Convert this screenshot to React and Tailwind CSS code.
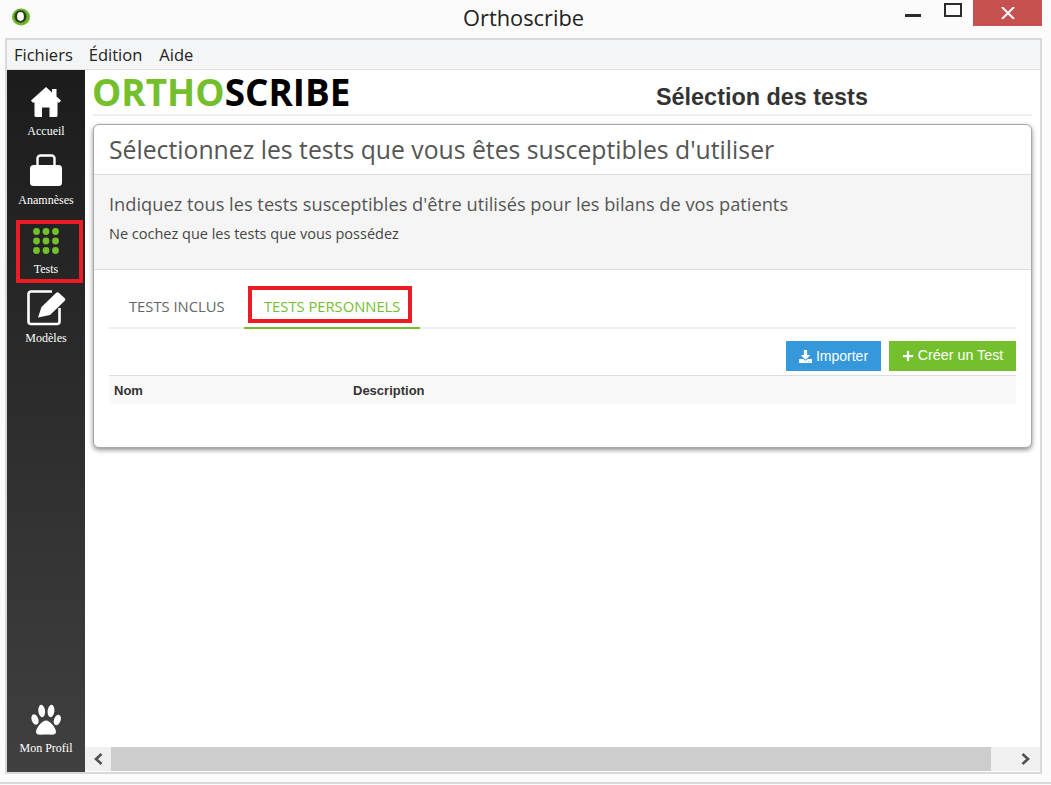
import React from 'react';
import { FaDownload, FaPlus } from 'react-icons/fa';

const serif = "font-['Liberation_Serif',serif]";

const HomeIcon = () => (
    <svg width="30" height="30" viewBox="0 0 30 30" fill="white">
        <path d="M15 0 L21 5.5 V2 H25.5 V9.5 L30 13.5 L28.5 15.5 H26.5 V28.5 a1.5 1.5 0 0 1 -1.5 1.5 H18.5 V20.5 H11 V30 H5 A1.5 1.5 0 0 1 3.5 28.5 V15.5 H1.5 L0 13.5 Z" />
    </svg>
);

const CaseIcon = () => (
    <svg width="32" height="32" viewBox="0 0 32 32">
        <path d="M7.5 12 V4.5 a3 3 0 0 1 3 -3 h11 a3 3 0 0 1 3 3 V12" fill="none" stroke="white" strokeWidth="2.4" />
        <rect x="0" y="11" width="32" height="21" rx="3.5" fill="white" />
    </svg>
);

const DotsIcon = () => (
    <svg width="27" height="26" viewBox="0 0 27 26" fill="#74c02c">
        {[3.5, 13, 22.5].map(y => [3.5, 13, 22.5].map(x => (
            <circle key={`${x}-${y}`} cx={x} cy={y} r="3.4" />
        )))}
    </svg>
);

const EditIcon = () => (
    <svg width="39" height="36" viewBox="0 0 39 36">
        <path d="M25 1.5 H4 a2.5 2.5 0 0 0 -2.5 2.5 V31.5 a2.5 2.5 0 0 0 2.5 2.5 H30 a2.5 2.5 0 0 0 2.5 -2.5 V18" fill="none" stroke="white" strokeWidth="2.6" />
        <path d="M11 27.5 L14.5 17 L29 3 a2 2 0 0 1 3 0 L37.5 8 a2 2 0 0 1 0 3 L23 25 Z" fill="white" />
    </svg>
);

const PawIcon = () => (
    <svg width="30" height="31" viewBox="0 0 30 31" fill="white">
        <ellipse cx="10.7" cy="7" rx="3.4" ry="6.2" transform="rotate(-6 10.7 7)" />
        <ellipse cx="20" cy="7" rx="3.4" ry="6.2" transform="rotate(6 20 7)" />
        <ellipse cx="4" cy="15.5" rx="3.3" ry="5.4" transform="rotate(-20 4 15.5)" />
        <ellipse cx="26.3" cy="16" rx="3.3" ry="5.4" transform="rotate(20 26.3 16)" />
        <path d="M15 16.5 C19 16.5 25 24 25 28 C25 31.5 20 30.5 15 30.5 C10 30.5 5 31.5 5 28 C5 24 11 16.5 15 16.5 Z" />
    </svg>
);

const NavItem = ({ icon, label, height, gap = 'mt-[7px]' }) => (
    <div className={`flex flex-col items-center justify-end ${height}`}>
        {icon}
        <span className={`${serif} text-[12px] leading-[14px] text-white ${gap}`}>{label}</span>
    </div>
);

const App = () => {
    return (
        <div className="relative w-[1051px] h-[785px] overflow-hidden bg-[#fbfbfb] font-['Noto_Sans',sans-serif]">
            {/* Title bar */}
            <div className="relative h-[38px] flex items-center justify-center">
                <svg className="absolute left-[11px] top-[7px]" width="20" height="20" viewBox="0 0 20 20">
                    <ellipse cx="10" cy="10" rx="9" ry="8.5" fill="#6ab42c" />
                    <ellipse cx="9.5" cy="9.5" rx="6" ry="6.2" fill="#2c3a1c" />
                    <ellipse cx="9.5" cy="9.5" rx="3.4" ry="4.4" fill="#fbfbfb" />
                </svg>
                <span className="text-[21.8px] leading-[36px] pb-[3px] text-[#222] font-['Open_Sans',sans-serif] mr-[4px]">Orthoscribe</span>
                <div className="absolute left-[905px] top-[14px] w-[16px] h-[3px] bg-[#2b2b2b]" />
                <div className="absolute left-[944px] top-[3px] w-[18px] h-[14px] border-2 border-[#2b2b2b]" />
                <div className="absolute left-[973px] top-0 w-[69px] h-[26px] bg-[#c75050] flex items-center justify-center">
                    <svg width="14" height="12" viewBox="0 0 14 12" stroke="white" strokeWidth="2"><path d="M1 0 L13 12 M13 0 L1 12" /></svg>
                </div>
            </div>

            {/* Window frame */}
            <div className="ml-[5px] w-[1037px] h-[736px] border-2 border-[#d9d9d9] flex flex-col bg-white">
                <div className="h-[30px] shrink-0 bg-[#f4f5f7] border-b border-[#e3e3e3] flex items-center gap-[16px] pl-[7px] pt-[2px] text-[16.5px] text-[#222] font-['Open_Sans',sans-serif]">
                    <span>Fichiers</span>
                    <span>Édition</span>
                    <span className="ml-[1px]">Aide</span>
                </div>

                <div className="flex flex-1 min-h-0">
                    {/* Sidebar */}
                    <div className="w-[78px] shrink-0 flex flex-col bg-gradient-to-b from-[#1c1c1c] to-[#404040] pb-[17px]">
                        <NavItem icon={<HomeIcon />} label="Accueil" height="h-[68px]" />
                        <NavItem icon={<CaseIcon />} label="Anamnèses" height="h-[69px]" />
                        <NavItem icon={<DotsIcon />} label="Tests" height="h-[69px]" gap="mt-[8px]" />
                        <NavItem icon={<EditIcon />} label="Modèles" height="h-[69px]" gap="mt-[5px]" />
                        <div className="mt-auto">
                            <NavItem icon={<PawIcon />} label="Mon Profil" height="h-[52px]" gap="mt-[6px]" />
                        </div>
                    </div>

                    {/* Main area */}
                    <div className="flex-1 min-w-0 flex flex-col">
                        <div className="flex-1 pl-[8px] pr-[8px]">
                            <div className="h-[46px] border-b-2 border-[#eeeeee] flex items-start">
                                <div className="w-[563px] -ml-[1px] mr-[1px] text-[36.9px] leading-[44px] font-bold font-['Open_Sans',sans-serif] text-black">
                                    <span className="text-[#74c02c]">ORTHO</span>SCRIBE
                                </div>
                                <div className="text-[23.4px] leading-[26px] mt-[14px] font-bold font-['Liberation_Sans',sans-serif] text-[#333]">Sélection des tests</div>
                            </div>

                            {/* Card */}
                            <div className="mt-[8px] h-[324px] rounded-[6px] border border-[#a8a8a8] bg-white shadow-[0_2px_5px_rgba(0,0,0,0.45)] font-['Open_Sans',sans-serif]">
                                <div className="h-[49px] pl-[15px] pt-[8px] text-[24.75px] leading-[34px] text-[#555]">Sélectionnez les tests que vous êtes susceptibles d'utiliser</div>
                                <div className="h-[96px] bg-[#f5f5f5] border-y border-[#dddddd] pl-[15px] pt-[17px]">
                                    <div className="text-[18.25px] leading-[24px] text-[#555]">Indiquez tous les tests susceptibles d'être utilisés pour les bilans de vos patients</div>
                                    <div className="text-[14.5px] leading-[18px] mt-[9px] text-[#444]">Ne cochez que les tests que vous possédez</div>
                                </div>
                                <div className="px-[15px]">
                                    <div className="mt-[25px] h-[34px] flex border-b-2 border-[#eeeeee] text-[14.75px] leading-[22px]">
                                        <div className="w-[135px] h-[34px] pl-[20px] text-[#666]">TESTS INCLUS</div>
                                        <div className="w-[176px] h-[34px] pl-[20px] text-[#74c02c] border-b-2 border-[#74c02c]">TESTS PERSONNELS</div>
                                    </div>
                                    <div className="mt-[12px] flex justify-end gap-[8px] font-['Liberation_Sans',sans-serif] text-white">
                                        <div className="w-[95px] h-[30px] text-[14px] bg-[#3498db] flex items-center justify-center gap-[4px]"><FaDownload size={13} />Importer</div>
                                        <div className="w-[127px] h-[30px] text-[14.3px] bg-[#74c02c] flex items-center justify-center gap-[4px]"><FaPlus size={12} />Créer un Test</div>
                                    </div>
                                    <div className="mt-[4px] h-[29px] pt-[2px] bg-[#f9f9f9] border-t border-[#dddddd] flex items-center pl-[5px] font-['Liberation_Sans',sans-serif] text-[13px] font-bold text-[#333]">
                                        <div className="w-[239px]">Nom</div>
                                        <div>Description</div>
                                    </div>
                                </div>
                            </div>
                        </div>

                        {/* Horizontal scrollbar */}
                        <div className="h-[24px] mb-[1px] shrink-0 bg-[#f0f0f0] flex items-center">
                            <div className="w-[26px] flex justify-center">
                                <svg width="10" height="12" viewBox="0 0 10 12" fill="none" stroke="#505050" strokeWidth="2.6"><path d="M8.5 1 L3 6 L8.5 11" /></svg>
                            </div>
                            <div className="w-[880px] h-[24px] bg-[#cdcdcd]" />
                            <div className="flex-1 flex justify-end pr-[9px]">
                                <svg width="10" height="12" viewBox="0 0 10 12" fill="none" stroke="#505050" strokeWidth="2.6"><path d="M1.5 1 L7 6 L1.5 11" /></svg>
                            </div>
                        </div>
                    </div>
                </div>
            </div>
            <div className="mt-[8px] h-[2px] bg-[#d9d9d9]" />

            {/* Red annotation boxes */}
            <div className="absolute left-[16px] top-[220px] w-[67px] h-[63px] border-[4px] border-[#ed1c24]" />
            <div className="absolute left-[248px] top-[286px] w-[164px] h-[37px] border-[4px] border-[#ed1c24]" />
        </div>
    );
};

export default App;
